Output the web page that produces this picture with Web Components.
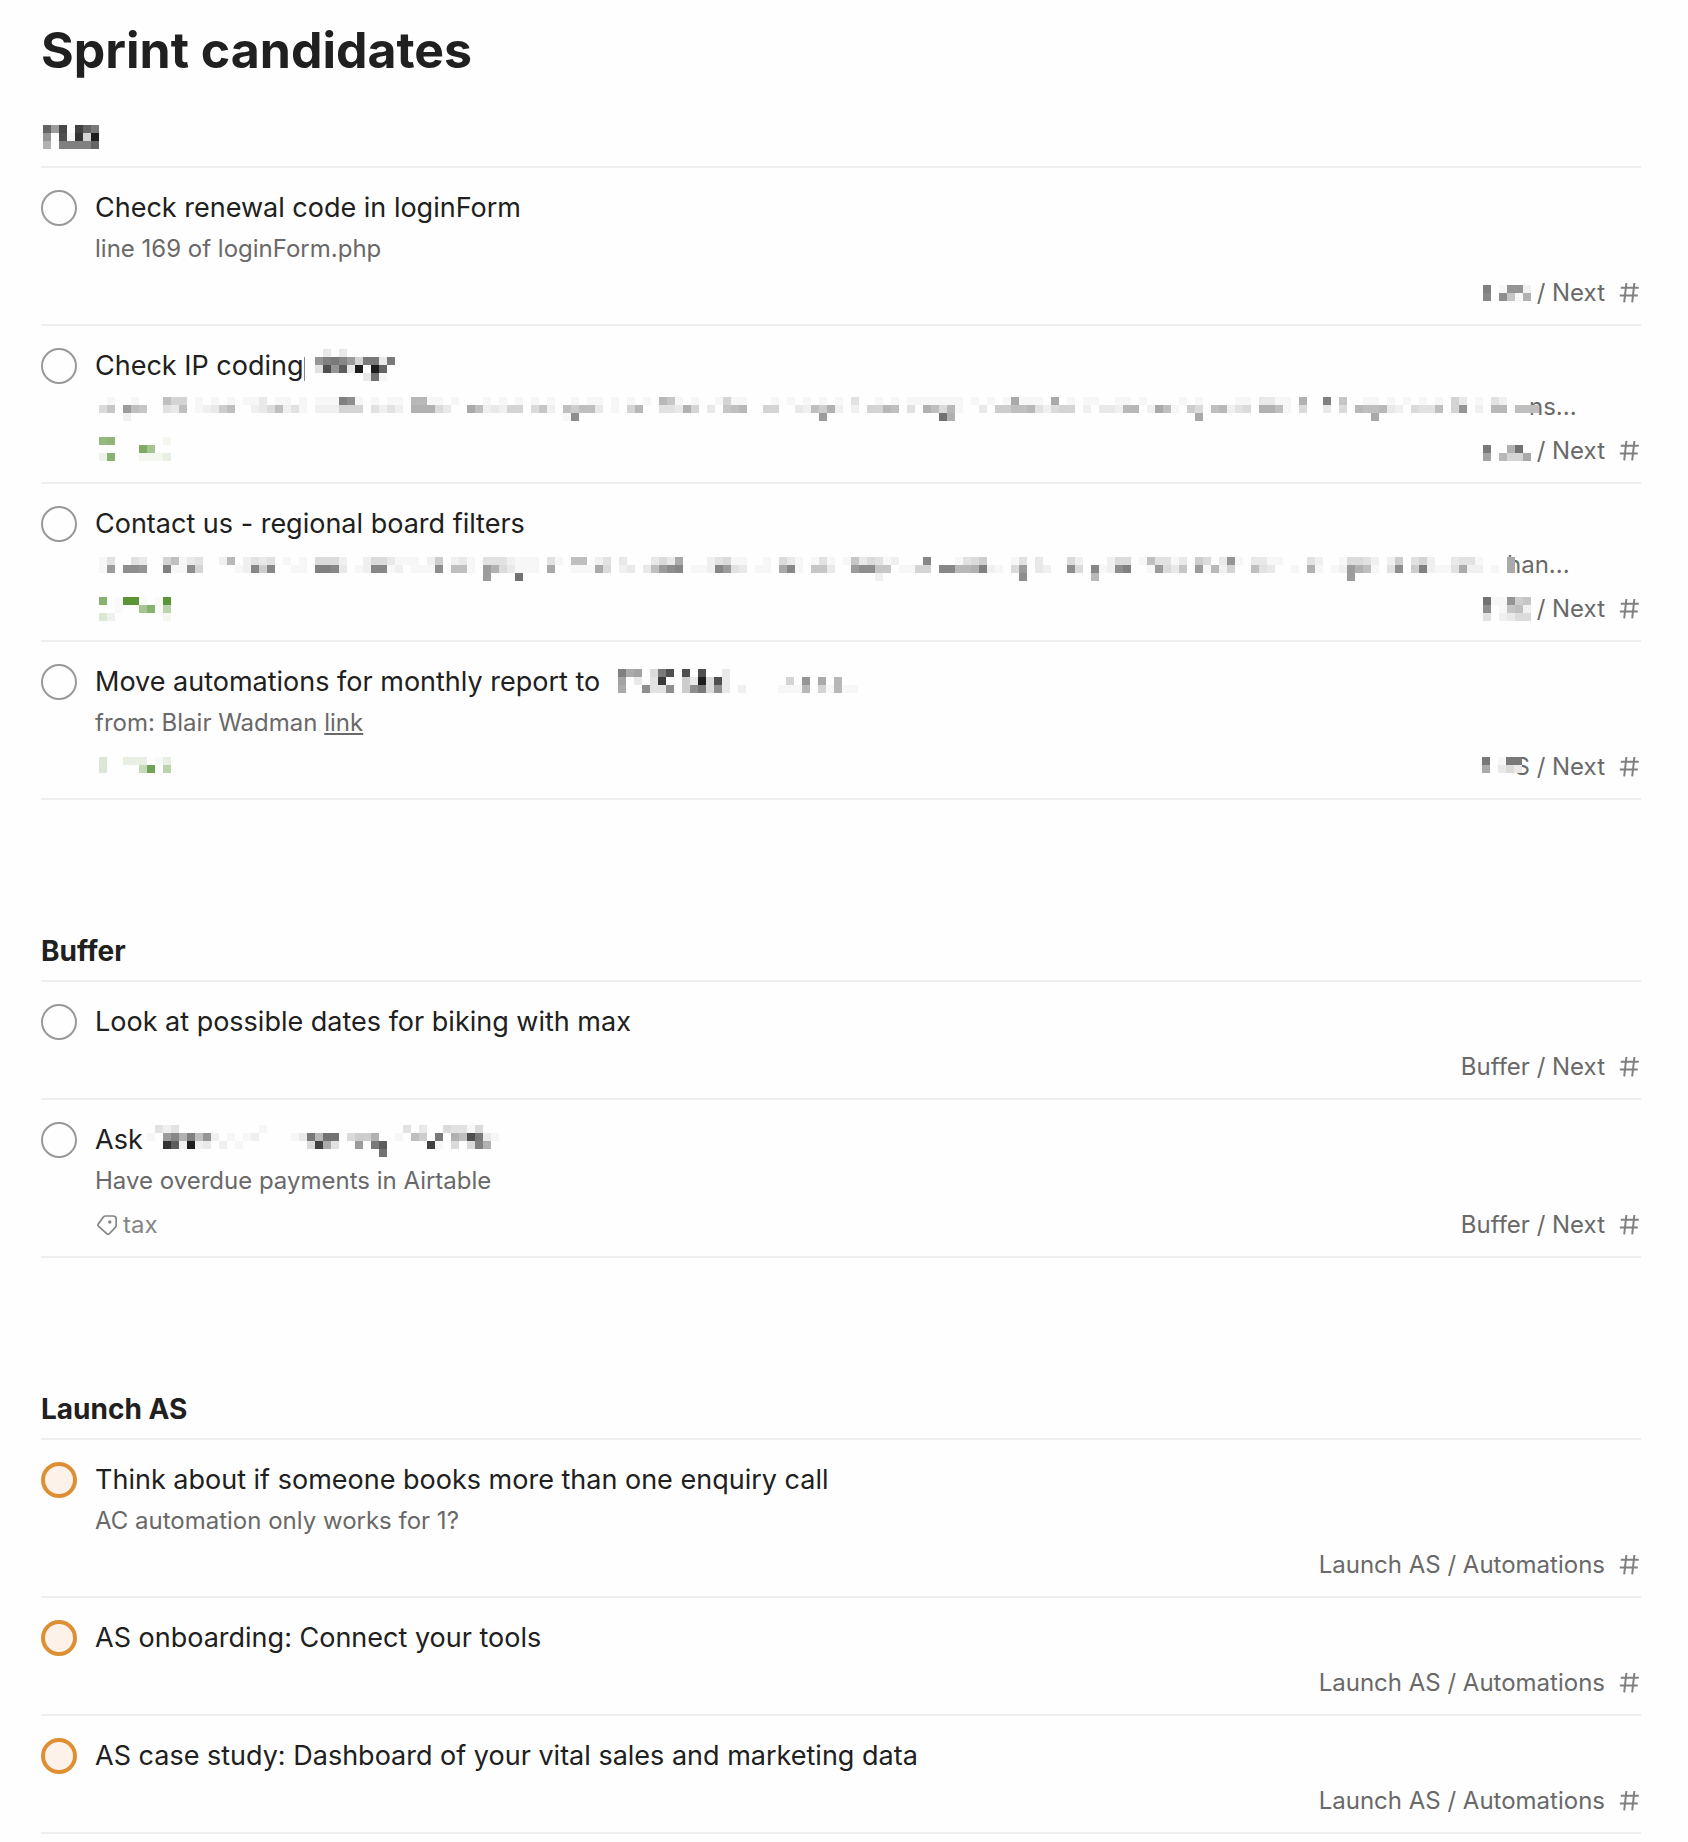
<!DOCTYPE html>
<html lang="en">
<head>
<meta charset="utf-8">
<title>Sprint candidates</title>
<style>
  body {
    margin: 0;
    padding: 18px 47px 0 41px;
    background: #fefefe;
    color: #202020;
    font-family: Inter, "Liberation Sans", sans-serif;
  }
  h1 { margin: 0 0 34px; font-size: 50px; line-height: 64px; font-weight: 700; }
  a { color: inherit; }
</style>
</head>
<body>
<main>
  <h1>Sprint candidates</h1>

  <task-section>
    <pixel-mask slot="heading" top="9" style="margin-left:2px" rows="meq.rmj.|f.p1t6w.|b.iiiim."></pixel-mask>

    <task-item>
      Check renewal code in loginForm
      <span slot="note">line 169 of loginForm.php</span>
      <pixel-mask slot="project" top="13" rows="i.1ff2|h.g81b"></pixel-mask>
      <span slot="project">/ Next</span>
    </task-item>

    <task-item>
      Check IP coding<cut-edge></cut-edge><pixel-mask top="5" style="margin-left:10px" rows=".3.3|fijhe6jj3j|4pfn3w.wm|......3k1"></pixel-mask>
      <pixel-mask class="over" slot="note" top="11" style="margin-left:4px"
        rows=".1..1...966.1.1.1.113.11.1.111ig1.1.11.aa11.1...1.1.1.1.1..1.11.1.1.1.a81.1..1611...1.1.1.1.1.4..1.1.1111111.1.1.1c111.c.1.11..11.1....1.1....11.3311.b..i.8..11.1.1.1.1.63.1.42....|58.e98..439.12379..2359241.222666.4242.bbb53..c923266.582.97993.1.6a..443b6.3.89a..66..3297b2.2.66a9.4.b95a1..3.7799a42566.2.332aa.2c91.75.9a245.bb91.5..3.5.a99a32.5449.6f.2.aa.999|...2~54~1g~30~e~14~kb~30~c~21~c"></pixel-mask>
      <span slot="note" style="margin-left:-10px">ns...</span>
      <pixel-mask slot="tag" top="7" tone="green" style="margin-left:4px" rows="jk......2|.....ng|3l...2224"></pixel-mask>
      <pixel-mask slot="project" top="7" rows="......|j..bk.|d.a66c"></pixel-mask>
      <span slot="project">/ Next</span>
    </task-item>

    <task-item>
      Contact us - regional board filters
      <pixel-mask class="over" slot="note" top="13" style="margin-left:4px"
        rows="14..43..69134..2a.2434.1.1.5552..25531 11.27.231.44421 11.41.99.24.3...353c...24511..1.531.141.18354 12...h...1457...14.3...52...255.19441 3.75.3f1.3311...42..15542.27.462..3441...c|1e.ggf..i11g6....12h7h..11.iih3.12hh12.111g.991.eb53111.c..111c5.23.39egh.112he43.11.ch1.883..egg88.1166.hhaabi21.5e.32..g5.h12gi..1e538.e1a26..943..1.b1.12eb91.4g.7i2114c22.1.c|~48~e...k~44~2~17~g........a~31~e"></pixel-mask>
      <span slot="note" style="margin-left:-8px">han...</span>
      <pixel-mask slot="tag" top="9" tone="green" style="margin-left:4px" rows="l.1tt1.1t|..1..gl1c|63......2"></pixel-mask>
      <pixel-mask slot="project" top="9" rows="k11f78|g.1892|4.2355"></pixel-mask>
      <span slot="project">/ Next</span>
    </task-item>

    <task-item>
      Move automations for monthly report to<pixel-mask top="9" style="margin-left:18px" rows="icd.5jp.p.p..3|d.3.4s..73w5p3.......6.f.c.a|c..g44g.7gj5g3.2....111a.61a11"></pixel-mask>
      <span slot="note">from: Blair Wadman <a href="#link">link</a></span>
      <pixel-mask slot="tag" top="11" tone="green" style="margin-left:4px" rows="6..444.14|6....ap.c"></pixel-mask>
      <pixel-mask class="over" slot="project" top="11" rows="j.1jj|c.353"></pixel-mask>
      <span slot="project" style="margin-left:-14px">S / Next</span>
    </task-item>
  </task-section>

  <task-section>
    <span slot="heading">Buffer</span>
    <task-item>
      Look at possible dates for biking with max
      <span slot="project">Buffer / Next</span>
    </task-item>
    <task-item>
      Ask<pixel-mask top="7" style="margin-left:4px" rows=".424~10~1~17~4.3..54415|1.ehbi9f2.1.12....13jakk.577b..1.97.j.b9pj31|..tn2w23.2.1........5rc4..e.jn.....r1.5.5ib|~29~k"></pixel-mask>
      <span slot="note">Have overdue payments in Airtable</span>
      <tag-label slot="tag">tax</tag-label>
      <span slot="project">Buffer / Next</span>
    </task-item>
  </task-section>

  <task-section>
    <span slot="heading">Launch AS</span>
    <task-item priority>
      Think about if someone books more than one enquiry call
      <span slot="note">AC automation only works for 1?</span>
      <span slot="project">Launch AS / Automations</span>
    </task-item>
    <task-item priority>
      AS onboarding: Connect your tools
      <span slot="project">Launch AS / Automations</span>
    </task-item>
    <task-item priority>
      AS case study: Dashboard of your vital sales and marketing data
      <span slot="project">Launch AS / Automations</span>
    </task-item>
  </task-section>
</main>

<template id="section-template">
  <style>
    :host { display: block; margin-bottom: 130px; }
    :host(:last-of-type) { margin-bottom: 0; }
    h2 { display: flex; height: 40px; margin: 0; padding: 1px 0 9px; border-bottom: 2px solid #eee;
         font-size: 28px; line-height: 40px; font-weight: 700; }
  </style>
  <section>
    <h2><slot name="heading"></slot></h2>
    <slot></slot>
  </section>
</template>

<template id="item-template">
  <style>
    :host { display: flex; gap: 18px; padding: 19px 0 11px; border-bottom: 2px solid #eee; }
    input { appearance: none; flex: none; box-sizing: border-box; width: 36px; height: 36px; margin: 3px 0 0;
            border: 2px solid #999; border-radius: 50%; background: transparent; cursor: pointer; }
    :host([priority]) input { border: 4px solid #de8f34; background: #fcf2ea; }
    .body { flex: 1; min-width: 0; }
    label { display: flex; height: 42px; font-size: 27px; line-height: 42px; white-space: nowrap; }
    .note { display: flex; height: 40px; font-size: 24px; line-height: 40px; color: #696969; white-space: nowrap; }
    .note[hidden] { display: none; }
    .meta { display: flex; justify-content: space-between; height: 40px; margin-top: 4px;
            font-size: 24px; line-height: 40px; color: #696969; }
    .tags, a { display: flex; }
    a { align-items: center; color: inherit; text-decoration: none; white-space: nowrap; }
    .name { display: flex; gap: 6px; }
    svg { width: 22px; height: 20px; margin-left: 14px; fill: none; stroke: #808080; stroke-width: 2; }
  </style>
  <input type="checkbox" id="done">
  <div class="body">
    <label for="done"><slot></slot></label>
    <div class="note"><slot name="note"></slot></div>
    <div class="meta">
      <div class="tags"><slot name="tag"></slot></div>
      <a href="#project"><span class="name"><slot name="project"></slot></span>
        <svg viewBox="0 0 22 20" aria-hidden="true"><path d="M1.8 4.7H19.8M.8 12.4H18.8M7.4 0 5.2 19.4M15.4 0 13.2 19.4"/></svg></a>
    </div>
  </div>
</template>

<template id="tag-template">
  <style>
    :host { display: flex; align-items: center; gap: 6px; margin-left: 2px; color: #858585; }
    svg { width: 20px; height: 20px; fill: none; stroke: currentColor; stroke-width: 1.7; }
  </style>
  <svg viewBox="0 0 20 20" aria-hidden="true">
    <path d="M8.6 1H16a3.2 3.2 0 0 1 3.2 3.2v6c0 .9-.3 1.6-.9 2.2l-5.7 6.1a2 2 0 0 1-2.9.1L1.7 11.4a2 2 0 0 1-.1-2.8l4.7-6.5A3 3 0 0 1 8.6 1z"/>
    <circle cx="12.8" cy="7" r="1.7" fill="currentColor" stroke="none"/>
  </svg>
  <slot></slot>
</template>

<script>
  const stamp = (host, id) =>
    host.attachShadow({ mode: 'open' }).append(document.getElementById(id).content.cloneNode(true));

  customElements.define('task-section', class extends HTMLElement {
    constructor() { super(); stamp(this, 'section-template'); }
  });

  customElements.define('task-item', class extends HTMLElement {
    constructor() { super(); stamp(this, 'item-template'); }
    connectedCallback() {
      this.shadowRoot.querySelector('.note').hidden = !this.querySelector('[slot=note]');
    }
  });

  customElements.define('tag-label', class extends HTMLElement {
    constructor() { super(); stamp(this, 'tag-template'); }
  });

  // Thin remainder of a letter at the edge of a masked run.
  customElements.define('cut-edge', class extends HTMLElement {
    constructor() {
      super();
      this.attachShadow({ mode: 'open' }).innerHTML =
        '<style>:host{display:block;width:1px;height:24px;margin-top:12px;background:#888}</style>';
    }
  });

  // Mosaic that hides private text. Each row is a string of base-36 shades,
  // "." is an empty cell and "~n~" skips n cells.
  customElements.define('pixel-mask', class extends HTMLElement {
    connectedCallback() {
      if (this.shadowRoot) return;
      const cell = 8;
      const top = Number(this.getAttribute('top')) - 1;
      const green = this.getAttribute('tone') === 'green';
      const rows = this.getAttribute('rows').replace(/ /g, '').split('|')
        .map(r => r.replace(/~(\d+)~/g, (m, n) => '.'.repeat(n)));
      const width = Math.max(...rows.map(r => r.length)) * cell;
      let rects = '';
      rows.forEach((row, y) => [...row].forEach((c, x) => {
        if (c === '.') return;
        const v = parseInt(c, 36);
        const mix = base => Math.round(254 - (254 - base) * v / 32);
        const g = Math.max(0, 254 - 7 * v);
        const fill = green ? `rgb(${mix(74)},${mix(138)},${mix(36)})` : `rgb(${g},${g},${g})`;
        rects += `<rect x="${x * cell}" y="${top + y * cell}" width="${cell}" height="${cell}" fill="${fill}"/>`;
      }));
      this.attachShadow({ mode: 'open' }).innerHTML =
        `<style>:host{display:block;flex:none}:host(.over){position:relative}svg{display:block}</style>
         <svg width="${width}" height="40" shape-rendering="crispEdges" aria-hidden="true">${rects}</svg>`;
    }
  });
</script>
</body>
</html>
